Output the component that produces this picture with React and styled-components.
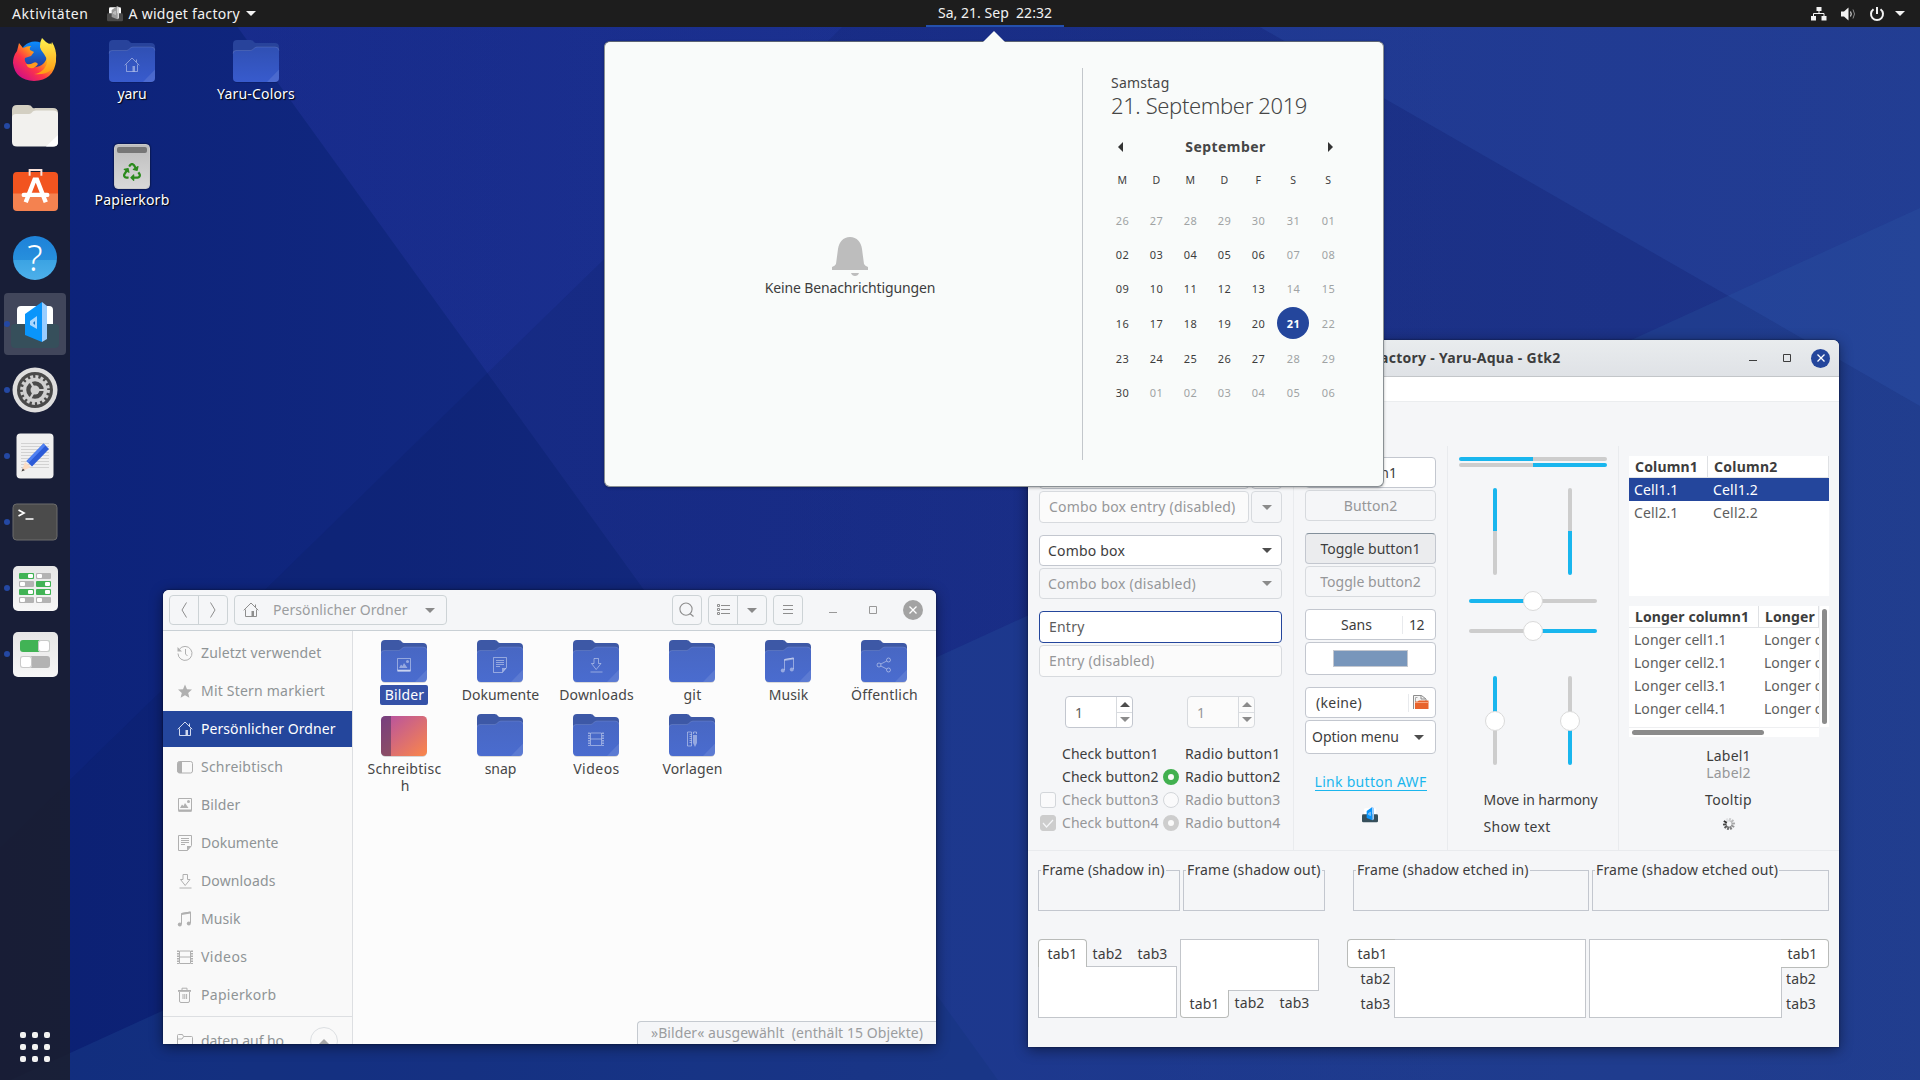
import React, { useLayoutEffect, useRef, useState } from 'react';
import styled, { createGlobalStyle, css } from 'styled-components';
import { FaRecycle } from 'react-icons/fa';

const Global = createGlobalStyle`
  *, *::before, *::after { box-sizing: border-box; }
  body { margin: 0; background: #10267a; overflow: hidden; }
  body, button, input {
    font-family: "Noto Sans", "Open Sans", sans-serif;
    font-size: 14px;
    color: #3d3d3d;
  }
  svg { display: block; flex: none; overflow: visible; }
`;

/* ---------- text with a fixed advance width ---------- */

const Run = styled.span`
  display: inline-block;
  flex: none;
  white-space: pre;
  line-height: ${(p) => p.$lh || 18}px;
  font-size: ${(p) => p.$size || 14}px;
  font-weight: ${(p) => p.$weight || 400};
  color: ${(p) => p.$color || 'inherit'};
`;

function Text({ w, children, size, weight, color, lh }) {
  const ref = useRef(null);
  const [spacing, setSpacing] = useState(0);
  useLayoutEffect(() => {
    if (!w || !ref.current) return;
    const el = ref.current;
    el.style.letterSpacing = '0px';
    const range = document.createRange();
    range.selectNodeContents(el);
    const next = (w - range.getBoundingClientRect().width) / String(children).length;
    el.style.letterSpacing = `${next}px`;
    setSpacing(next);
  }, [w, children]);
  return (
    <Run ref={ref} $size={size} $weight={weight} $color={color} $lh={lh} style={{ letterSpacing: `${spacing}px` }}>
      {children}
    </Run>
  );
}

/* ---------- shared bits ---------- */

const Caret = styled.span`
  flex: none;
  width: 0;
  height: 0;
  border: 5px solid transparent;
  ${(p) =>
    p.$up
      ? css`border-bottom-color: ${p.$color || '#4d4d4d'}; border-top-width: 0;`
      : css`border-top-color: ${p.$color || '#4d4d4d'}; border-bottom-width: 0;`}
`;

const glyphs = {
  home: (
    <>
      <path d="M.7 8.3 8 1l7.3 7.3M2.5 7.5v7h11v-7M12.5 5V2.5" fill="none" stroke="currentColor" />
      <path d="M8.5 9H11v5.5H8.5z" />
    </>
  ),
  recent: (
    <>
      <path d="M2.4 4.2A7 7 0 1 1 1 8.5M8.5 4v5l2 2" fill="none" stroke="currentColor" />
      <path d="M.5 2v4.5H5z" />
    </>
  ),
  star: <path d="m8 1.6 2 4.6 5 .4-3.8 3.3 1.2 4.9L8 12.2l-4.400 2.600 1.200-4.900L1 6.600l5-.4z" />,
  desktop: (
    <>
      <rect x=".5" y="2.5" width="15" height="11.5" rx="2" fill="none" stroke="currentColor" />
      <path d="M2 2.5h3V14H2L.5 12.500V4z" />
    </>
  ),
  image: (
    <>
      <path d="M1.500 1.500h13v12h-13zM1.500 14.200h13" fill="none" stroke="currentColor" />
      <path d="M3 11l2-3.500L6.500 9l1.500-3 3.500 5zM1.500 12.500h13v2h-13z" />
      <circle cx="11.500" cy="4.500" r="1.500" />
    </>
  ),
  doc: (
    <>
      <path d="M1.500.500h13v10l-4 5h-9zM4 3.500h8M4 5.500h8M4 7.500h8M4 9.500h4" fill="none" stroke="currentColor" />
      <path d="M10 15.500V11h4.500z" />
    </>
  ),
  download: (
    <path d="M6 1.500h4.500v5H13l-4.800 6L3.500 6.500H6zM2.500 15h12" fill="none" stroke="currentColor" />
  ),
  music: (
    <>
      <path d="M4.500 13V2.500L13.500 1v11" fill="none" stroke="currentColor" />
      <path d="M4.500 2 13.500.6v2L4.500 4z" />
      <circle cx="2.800" cy="13.500" r="2" />
      <circle cx="11.800" cy="12.500" r="2" />
    </>
  ),
  video: (
    <>
      <path d="M2.500 2v12.500h11V2zM2.500 8h11" fill="none" stroke="currentColor" />
      <path d="M1 1.500v13.500M15 1.500v13.500" fill="none" stroke="currentColor" strokeWidth="2" strokeDasharray="1.500 1" />
    </>
  ),
  trash: (
    <>
      <path d="M2.500 5v9q0 1.500 1.500 1.500h7q1.500 0 1.500-1.500V5M6 7v5M7.800 7v5M9.600 7v5" fill="none" stroke="currentColor" />
      <path d="M1 3h13v1.800H1z" />
      <path d="M5 3V1.200h5V3" fill="none" stroke="currentColor" />
    </>
  ),
  folder: (
    <path d="M.500 14V2.500q0-1 1-1h4l1 2h8q1 0 1 1V14zM.500 6h4.500l1.500-2.200" fill="none" stroke="currentColor" />
  ),
  share: (
    <path
      d="M12.500 1a2 2 0 1 1 0 4 2 2 0 0 1 0-4zM3 6a2 2 0 1 1 0 4 2 2 0 0 1 0-4zM12.500 11a2 2 0 1 1 0 4 2 2 0 0 1 0-4zM4.800 7l6-3M4.800 9l6 3"
      fill="none"
      stroke="currentColor"
    />
  ),
  template: (
    <>
      <path d="M3.500 1h4v14h-4zM5.500 3.500h2M5.500 5.500h2M5.500 7.500h2M5.500 9.500h2M5.500 11.500h2M9.500 3V1h3v2" fill="none" stroke="currentColor" />
      <path d="M9 4h4v8l-2 4-2-4z" />
    </>
  ),
};

const Glyph = ({ name }) => (
  <svg width="16" height="16" viewBox="0 0 16 16" fill="currentColor">
    {glyphs[name]}
  </svg>
);

const FolderIcon = ({ glyph, back = '#3d58a6', top = '#4867c3', bottom = '#4a6ccf', id }) => (
  <svg width="46" height="43" viewBox="0 0 46 43">
    <defs>
      <linearGradient id={id} x1="0" y1="0" x2="0" y2="1">
        <stop offset="0" stopColor={top} />
        <stop offset="1" stopColor={bottom} />
      </linearGradient>
    </defs>
    <path d="M1 38v3.500q1 1.300 3 1.300h38q2 0 3-1.300V38z" fill="rgba(0,0,0,.18)" />
    <path d="M0 4q0-4 4-4h13.500q2.500 0 3.500 2 .7 1 2 1H42q4 0 4 4v20H0z" fill={back} />
    <path d="M0 13.500q0-3 3-3h14.500c2.500 0 3.500-3.500 6.500-3.500h18q4 0 4 3.500V38q0 4-4 4H4q-4 0-4-4z" fill={`url(#${id})`} />
    <path d="M0 13.500q0-3 3-3h14.500c2.500 0 3.500-3.500 6.500-3.500h18q4 0 4 3.500" fill="none" stroke="rgba(255,255,255,.12)" />
    <path d="M34 42 46 29.500V38q0 4-4 4z" fill="rgba(255,255,255,.1)" />
    {glyph && (
      <g transform="translate(15 17)" color="rgba(255,255,255,.42)" fill="rgba(255,255,255,.42)">
        {glyphs[glyph]}
      </g>
    )}
  </svg>
);

const DesktopFolderIcon = () => (
  <svg width="46" height="43" viewBox="0 0 46 43">
    <defs>
      <linearGradient id="deskfold" x1="0" y1="0" x2="1" y2="1">
        <stop offset="0" stopColor="#b34fa6" />
        <stop offset="1" stopColor="#fb8749" />
      </linearGradient>
    </defs>
    <rect y="2.800" width="46" height="40" rx="4.500" fill="rgba(0,0,0,.2)" />
    <rect y="2" width="46" height="40" rx="4.500" fill="url(#deskfold)" />
    <path d="M10 2v40H4.500Q0 42 0 37.500v-31Q0 2 4.500 2z" fill="rgba(60,45,90,.5)" />
  </svg>
);

const AwfIcon = ({ size, gray, box = '#364f5b' }) => (
  <svg width={size} height={size} viewBox="0 0 48 48">
    <path d="M6 26V8q0-4 4-4h28q4 0 4 4v18z" fill="#fff" />
    <rect y="22" width="48" height="24" rx="4" fill={box} />
    <path d="M14 12 31 0v40L14 33z" fill={gray ? '#9a9a9a' : '#0a95fb'} />
    <path d="M31 0l5 4v33l-5 3z" fill={gray ? '#d5d5d5' : '#99cdff'} />
    <path d="M26 14v13l-7-4v-4z" fill={gray ? '#d0d0d0' : '#aad7ff'} />
    <path d="M24 19v4l-2-2z" fill={gray ? '#777' : '#0a74cc'} />
  </svg>
);

/* ---------- wallpaper ---------- */

const WallpaperSvg = styled.svg`
  position: absolute;
  inset: 0;
`;

const Wallpaper = () => (
  <WallpaperSvg width="1920" height="1080" viewBox="0 0 1920 1080">
    <defs>
      <linearGradient id="wall" x1="0" y1="0" x2="1" y2="0">
        <stop offset="0" stopColor="#0c2279" />
        <stop offset=".45" stopColor="#162d86" />
        <stop offset="1" stopColor="#21398f" />
      </linearGradient>
      <linearGradient id="fold" x1="0" y1="0" x2="1" y2="0">
        <stop offset="0" stopColor="#3c46c8" stopOpacity=".2" />
        <stop offset="1" stopColor="#3c46c8" stopOpacity=".04" />
      </linearGradient>
    </defs>
    <rect width="1920" height="1080" fill="url(#wall)" />
    <path d="M218 0 998 1080H1920V0z" fill="url(#fold)" />
    <path d="M870 0 0 848v232H1920V0z" fill="#04154c" fillOpacity=".13" />
    <path d="M0 1085 1920 208v872z" fill="#2c62a8" fillOpacity=".2" />
    <path d="M1213 0 1920 406V0z" fill="#3a6cc8" fillOpacity=".17" />
  </WallpaperSvg>
);

/* ---------- shell ---------- */

const Screen = styled.div`
  position: relative;
  width: 1920px;
  height: 1080px;
  overflow: hidden;
  display: flex;
  flex-direction: column;
`;

const TopBar = styled.header`
  position: relative;
  flex: none;
  height: 27px;
  background: #1d1d1d;
  color: #f2f2f2;
  display: grid;
  grid-template-columns: 926px 138px 1fr;
  align-items: center;
`;

const BarLeft = styled.div`
  display: flex;
  align-items: center;
  padding-left: 12px;
`;

const AppMenu = styled.div`
  display: flex;
  align-items: center;
  gap: 6px;
  margin-left: 18px;
`;

const Clock = styled.div`
  height: 27px;
  display: flex;
  justify-content: center;
  align-items: center;
  border-bottom: 2px solid #2450ac;
`;

const BarRight = styled.div`
  display: flex;
  justify-content: flex-end;
  align-items: center;
  gap: 14px;
  padding-right: 15px;
  & > :last-child { margin-left: -3px; }
`;

const Main = styled.div`
  position: relative;
  flex: 1;
  display: flex;
  min-height: 0;
`;

const Dock = styled.nav`
  width: 70px;
  background: rgba(27, 29, 43, 0.85);
  display: flex;
  flex-direction: column;
`;

const DockItem = styled.div`
  position: relative;
  width: 62px;
  height: ${(p) => (p.$active ? 62 : 66)}px;
  margin: ${(p) => (p.$active ? '2px 4px' : '0 4px')};
  padding-top: ${(p) => (p.$active ? 4 : 0)}px;
  border-radius: 4px;
  background: ${(p) => (p.$active ? 'rgba(255,255,255,.18)' : 'transparent')};
  display: flex;
  align-items: center;
  justify-content: center;
`;

const RunningDot = styled.i`
  position: absolute;
  left: 0;
  top: calc(50% - 3px);
  width: 6px;
  height: 6px;
  border-radius: 50%;
  background: #2448a3;
`;

const DockBottom = styled.div`
  margin-top: auto;
`;

const AppGrid = styled.div`
  display: grid;
  grid-template-columns: repeat(3, 6px);
  gap: 6px;
`;

const AppDot = styled.i`
  width: 6px;
  height: 6px;
  border-radius: 2px;
  background: #f2f2f2;
`;

const DesktopGrid = styled.div`
  display: grid;
  grid-template-columns: 124px 124px;
  grid-auto-rows: 105px;
  align-content: start;
  padding: 13px 0 0;
`;

const DesktopItem = styled.div`
  display: flex;
  flex-direction: column;
  align-items: center;
  gap: 2px;
  color: #fff;
  text-shadow: 1px 1px 1px #000;
`;

const Firefox = () => (
  <svg width="46" height="46" viewBox="0 0 46 46">
    <defs>
      <linearGradient id="ffo" x1=".9" y1=".1" x2=".15" y2=".85">
        <stop offset="0" stopColor="#fff44f" />
        <stop offset=".35" stopColor="#ffa716" />
        <stop offset=".65" stopColor="#ff3647" />
        <stop offset="1" stopColor="#d5127f" />
      </linearGradient>
      <linearGradient id="ffb" x1="0" y1="0" x2="0" y2="1">
        <stop offset="0" stopColor="#0a8cff" />
        <stop offset="1" stopColor="#2b2a85" />
      </linearGradient>
      <linearGradient id="ffy" x1="0" y1="0" x2="0" y2="1">
        <stop offset="0" stopColor="#fff44f" />
        <stop offset="1" stopColor="#ff9a14" />
      </linearGradient>
    </defs>
    <circle cx="23" cy="20" r="15.500" fill="url(#ffb)" />
    <path d="M5 14 7 6l4 5q4-2 8-2-2 2-1 4l4 2-3 4-6 2q-1 3 2 6 4 4 9 3 7-1 10-7 2-5 0-10l4-7q7 8 6 18-2 19-22 20Q3 43 1 26 1 19 5 14z" fill="url(#ffo)" />
    <path d="M30 1q-5 9 2 16 6 8 0 15-5 5-10 5 20 2 22-15 1-9-4-17l-1 3Q34 6 30 1z" fill="url(#ffy)" />
    <path d="M14 27q4 1 7-1t5 1q-3 5-8 4-3-1-4-4z" fill="#ff9a1f" />
  </svg>
);

const FilesIcon = () => (
  <svg width="46" height="42" viewBox="0 0 46 42">
    <path d="M0 5q0-5 5-5h11q3 0 4 2t3 1h18q5 0 5 5v12H0z" fill="#d3cfc2" />
    <path d="M0 13q0-4 4-4h13c3 0 3-3.500 7-3.500h17q5 0 5 4V37q0 4.500-5 4.500H5q-5 0-5-4.500z" fill="#f2f1ee" />
    <path d="M34 41.500 46 30v7q0 4.500-5 4.500z" fill="#fff" />
  </svg>
);

const SoftwareSvg = styled.svg`
  margin-bottom: 5px;
`;

const SoftwareIcon = () => (
  <SoftwareSvg width="45" height="42" viewBox="0 1 46 43" preserveAspectRatio="none">
    <path d="M0 8q0-4 4-4h38q4 0 4 4v19H0z" fill="#f2541f" />
    <path d="M0 26h46v14q0 4-4 4H4q-4 0-4-4z" fill="#f48250" />
    <path d="M17 8V2h12v6" fill="none" stroke="#fbe3da" strokeWidth="2" />
    <g stroke="#fff" strokeWidth="4.500" fill="none">
      <path d="M13 35 22 12h2.500L33.500 35" />
      <path d="M11 27.500h24" strokeLinecap="round" />
    </g>
  </SoftwareSvg>
);

const HelpCircle = styled.div`
  width: 44px;
  height: 44px;
  border-radius: 50%;
  background: linear-gradient(#1f84da 0 10%, #278fdc 54%, #3ba3e3 54%, #4db0ea);
  display: flex;
  align-items: center;
  justify-content: center;
`;

const SettingsIcon = () => (
  <svg width="46" height="46" viewBox="-23 -23 46 46">
    <circle r="22.500" fill="#dedede" />
    <circle r="18" fill="#4a4a4a" />
    <circle r="13.300" fill="none" stroke="#d0d0d0" strokeWidth="3.200" strokeDasharray="3 2.222" />
    <circle r="10.500" fill="none" stroke="#d0d0d0" strokeWidth="3.500" />
    <circle r="4.500" fill="#d0d0d0" />
    <path d="M0 0h10M0 0-5 9M0 0-5-9" stroke="#d0d0d0" strokeWidth="2.200" />
  </svg>
);

const EditorIcon = () => (
  <svg width="38" height="46" viewBox="0 0 38 46">
    <rect x=".5" y=".5" width="37" height="45" rx="4" fill="#f0f0f0" />
    <path d="M5 10.500h28M5 13.500h28M5 16.500h28M5 19.500h28M5 22.500h28M5 25.500h28M5 28.500h28M5 31.500h28M5 34.500h28" stroke="#d2d2d2" />
    <path d="M5.500 38.500 9 29l6 5z" fill="#fbdcc3" />
    <path d="M5.500 38.500 6.800 35.500l2 1.700z" fill="#444" />
    <path d="M10.500 28 27.500 10.500l5.500 5.500L16 33.500z" fill="#2c5bd8" />
    <path d="M10.500 28 27.500 10.500l2 2L12.500 30z" fill="#4f80f2" />
  </svg>
);

const TerminalIcon = () => (
  <svg width="46" height="38" viewBox="0 0 46 38">
    <rect x="1" y="1" width="44" height="36" rx="3.500" fill="#4b4b4b" stroke="#6c6c6c" />
    <path d="M6.500 7 12 10l-5.500 3M13.500 16h8" fill="none" stroke="#fff" strokeWidth="1.700" />
  </svg>
);

const Tile = styled.div`
  width: 45px;
  height: 45px;
  border-radius: 5px;
  background: linear-gradient(#e6e6e6, #f6f6f6);
  display: grid;
  grid-template-columns: ${(p) => (p.$single ? '30px' : '15px 15px')};
  gap: ${(p) => (p.$single ? '4px' : '2px')};
  place-content: center;
`;

const Switch = styled.i`
  height: ${(p) => (p.$big ? 12 : 6)}px;
  border-radius: ${(p) => (p.$big ? 3 : 1)}px;
  background: ${(p) => (p.$on ? '#41b355' : '#b3b3b3')};
  display: flex;
  justify-content: ${(p) => (p.$on ? 'flex-end' : 'flex-start')};
  padding: ${(p) => (p.$big ? 0 : 1)}px;
  &::after {
    content: '';
    width: ${(p) => (p.$big ? 12 : 5)}px;
    border-radius: inherit;
    background: #fff;
    box-shadow: ${(p) => (p.$big ? 'inset 0 0 0 1px #c9c9c9' : 'none')};
  }
`;

const TrashCan = styled.div`
  width: 36px;
  height: 45px;
  margin-top: -1px;
  border: 1px solid #c9c9c9;
  border-radius: 4px;
  background: linear-gradient(#bdbdbd, #d8d8d8);
  box-shadow: 0 0 2px #000;
  display: flex;
  flex-direction: column;
  align-items: center;
  gap: 10px;
  padding-top: 2px;
  color: #2b8a1d;
  &::before {
    content: '';
    width: 30px;
    height: 6px;
    border-radius: 2px;
    background: #777;
  }
`;

/* ---------- windows ---------- */

const Window = styled.section`
  position: absolute;
  left: ${(p) => p.$x}px;
  top: ${(p) => p.$y}px;
  width: ${(p) => p.$w}px;
  height: ${(p) => p.$h}px;
  border-radius: 6px 6px 0 0;
  overflow: hidden;
  display: flex;
  flex-direction: column;
  background: #f5f6f8;
  box-shadow: 0 0 2px rgba(0, 0, 0, 0.6), 0 3px 14px rgba(0, 0, 0, 0.45);
`;

const FilesHeader = styled.header`
  flex: none;
  height: 41px;
  display: flex;
  align-items: center;
  padding: 0 13px 0 6px;
  gap: 6px;
  background: #f5f6f8;
  border-bottom: 1px solid #c9d0d5;
  color: #8e8e8e;
`;

const HeaderGroup = styled.div`
  height: 30px;
  display: flex;
  border: 1px solid #cdd3d6;
  border-radius: 4px;
`;

const HeaderButton = styled.div`
  width: ${(p) => p.$w || 28}px;
  display: flex;
  align-items: center;
  justify-content: center;
  & + & { border-left: 1px solid #cdd3d6; width: 29px; }
`;

const PathButton = styled.div`
  width: 211px;
  display: flex;
  align-items: center;
  padding: 0 11px 0 8px;
  & > span:nth-of-type(1) { margin-left: 14px; }
  & > span:last-child { margin-left: auto; }
`;

const Spacer = styled.div`
  flex: 1;
`;

const WindowControls = styled.div`
  display: flex;
  align-items: center;
  color: ${(p) => p.$color};
  gap: ${(p) => p.$gap}px;
  margin-left: ${(p) => p.$ml || 0}px;
`;

const CloseCircle = styled.div`
  width: ${(p) => p.$size}px;
  height: ${(p) => p.$size}px;
  border-radius: 50%;
  background: ${(p) => p.$bg};
  display: flex;
  align-items: center;
  justify-content: center;
`;

const Controls = ({ color, closeBg, gap, closeGap, size, ml }) => (
  <WindowControls $color={color} $gap={gap} $ml={ml}>
    <svg width="8" height="8" viewBox="0 0 8 8"><path d="M0 6.500h8" stroke="currentColor" /></svg>
    <svg width="8" height="8" viewBox="0 0 8 8"><path d="M.500.500h7v7h-7z" fill="none" stroke="currentColor" /></svg>
    <WindowControls $ml={closeGap - gap}>
      <CloseCircle $bg={closeBg} $size={size}>
        <svg width="8" height="8" viewBox="0 0 8 8"><path d="M.5.5l7 7M7.500.5l-7 7" stroke="#fff" strokeWidth="1.300" /></svg>
      </CloseCircle>
    </WindowControls>
  </WindowControls>
);

const FilesBody = styled.div`
  flex: 1;
  display: flex;
  min-height: 0;
`;

const Sidebar = styled.aside`
  width: 190px;
  background: #f9f9f9;
  border-right: 1px solid #dddfe2;
  padding-top: 4px;
  overflow: hidden;
`;

const Place = styled.div`
  height: 36px;
  margin-bottom: 2px;
  padding: 0 14px;
  display: flex;
  align-items: center;
  gap: 8px;
  color: ${(p) => (p.$selected ? '#fff' : '#8f9496')};
  background: ${(p) => (p.$selected ? '#24469c' : 'transparent')};
  & > svg { color: ${(p) => (p.$selected ? '#d0d8ee' : '#b0b0b0')}; }
`;

const PlaceRule = styled.div`
  height: 1px;
  margin: 3px 0 6px;
  background: #dddfe2;
`;

const Eject = styled.div`
  width: 28px;
  height: 28px;
  flex: none;
  margin-left: auto;
  border: 1px solid #dcdfe2;
  border-radius: 50%;
  display: flex;
  align-items: center;
  justify-content: center;
`;

const FilesContent = styled.main`
  flex: 1;
  background: #fcfcfc;
  display: flex;
  flex-direction: column;
  justify-content: space-between;
  align-items: flex-end;
`;

const FileGrid = styled.div`
  display: grid;
  grid-template-columns: repeat(6, 96px);
  grid-auto-rows: 74px;
  width: 580px;
  padding-top: 9px;
`;

const FileCell = styled.div`
  display: flex;
  flex-direction: column;
  align-items: center;
  gap: 2px;
`;

const FileName = styled.div`
  height: 20px;
  padding: 1px 4px 0 5px;
  border-radius: 2px;
  display: flex;
  flex-direction: column;
  align-items: center;
  color: ${(p) => (p.$selected ? '#fff' : '#464646')};
  background: ${(p) => (p.$selected ? '#3552a8' : 'transparent')};
`;

const StatusBar = styled.footer`
  width: 299px;
  height: 23px;
  padding-left: 13px;
  display: flex;
  align-items: center;
  color: #9b9d9f;
  background: #f5f6f8;
  border: solid #c5cad0;
  border-width: 1px 0 0 1px;
  border-radius: 4px 0 0 0;
`;

const places = [
  ['recent', 'Zuletzt verwendet', 120.5],
  ['star', 'Mit Stern markiert', 124],
  ['home', 'Persönlicher Ordner', 134.5],
  ['desktop', 'Schreibtisch', 82],
  ['image', 'Bilder', 39.5],
  ['doc', 'Dokumente', 77.5],
  ['download', 'Downloads', 74.5],
  ['music', 'Musik', 39.5],
  ['video', 'Videos', 46.5],
  ['trash', 'Papierkorb', 75.5],
];

const files = [
  ['Bilder', 39.5, 'image'],
  ['Dokumente', 77.5, 'doc'],
  ['Downloads', 74.5, 'download'],
  ['git', 18, null],
  ['Musik', 39.5, 'music'],
  ['Öffentlich', 67, 'share'],
  ['Schreibtisc', 74, 'desk'],
  ['snap', 31.5, null],
  ['Videos', 46.5, 'video'],
  ['Vorlagen', 60, 'template'],
];

function FilesWindow() {
  return (
    <Window $x={163} $y={590} $w={773} $h={454}>
      <FilesHeader>
        <HeaderGroup>
          <HeaderButton>
            <svg width="6" height="16" viewBox="0 0 6 16"><path d="M5.500.5 1 8l4.500 7.500" fill="none" stroke="currentColor" /></svg>
          </HeaderButton>
          <HeaderButton>
            <svg width="6" height="16" viewBox="0 0 6 16"><path d="M.5.5 5 8 .5 15.500" fill="none" stroke="currentColor" /></svg>
          </HeaderButton>
        </HeaderGroup>
        <HeaderGroup>
          <PathButton>
            <Glyph name="home" />
            <Text w={134.5} color="#9b9d9f">Persönlicher Ordner</Text>
            <Caret $color="#8a8a8a" />
          </PathButton>
        </HeaderGroup>
        <Spacer />
        <HeaderGroup>
          <HeaderButton>
            <svg width="16" height="16" viewBox="0 0 16 16"><path d="M7 1a6 6 0 1 1 0 12.200A6 6 0 0 1 7 1zM11 11.500l3.500 3" fill="none" stroke="currentColor" strokeWidth="1.100" /></svg>
          </HeaderButton>
        </HeaderGroup>
        <HeaderGroup>
          <HeaderButton>
            <svg width="13" height="12" viewBox="0 0 13 12">
              <path d="M.500.500h2v2h-2zM.500 4.500h2v2h-2zM.500 8.500h2v2h-2zM4 1.500h9M4 5.500h9M4 9.500h9" fill="none" stroke="currentColor" />
            </svg>
          </HeaderButton>
          <HeaderButton><Caret $color="#8a8a8a" /></HeaderButton>
        </HeaderGroup>
        <HeaderGroup>
          <HeaderButton>
            <svg width="10" height="10" viewBox="0 0 10 10"><path d="M0 .500h10M0 4.500h10M0 8.500h10" stroke="currentColor" /></svg>
          </HeaderButton>
        </HeaderGroup>
        <Controls color="#999" closeBg="#a3a3a3" gap={32} closeGap={26} size={20} ml={20} />
      </FilesHeader>
      <FilesBody>
        <Sidebar>
          {places.map(([icon, label, w]) => (
            <Place key={label} $selected={icon === 'home'}>
              <Glyph name={icon} />
              <Text w={w}>{label}</Text>
            </Place>
          ))}
          <PlaceRule />
          <Place>
            <Glyph name="folder" />
            <Text w={83}>daten auf ho</Text>
            <Eject><Caret $up $color="#a8a8a8" /></Eject>
          </Place>
        </Sidebar>
        <FilesContent>
          <FileGrid>
            {files.map(([name, w, icon], i) => (
              <FileCell key={name}>
                {icon === 'desk' ? <DesktopFolderIcon /> : <FolderIcon id={`f${i}`} glyph={icon} />}
                <FileName $selected={i === 0}>
                  <Text w={w} lh={17}>{name}</Text>
                  {icon === 'desk' && <Text w={7.5} lh={17}>h</Text>}
                </FileName>
              </FileCell>
            ))}
          </FileGrid>
          <StatusBar>
            <Text w={272}>{'»Bilder« ausgewählt  (enthält 15 Objekte)'}</Text>
          </StatusBar>
        </FilesContent>
      </FilesBody>
    </Window>
  );
}

/* ---------- widget factory ---------- */

const TitleBar = styled.header`
  flex: none;
  height: 37px;
  display: grid;
  grid-template-columns: 1fr auto 1fr;
  align-items: center;
  padding: 0 9px;
  background: linear-gradient(#e9ecee, #dfe2e6);
  border-bottom: 1px solid #c3c6c9;
  & > :last-child { justify-self: end; }
`;

const MenuBar = styled.div`
  flex: none;
  height: 25px;
  background: #fff;
  border-bottom: 1px solid #ebedef;
`;

const ToolBar = styled.div`
  flex: none;
  height: 44px;
`;

const Columns = styled.div`
  flex: none;
  height: 405px;
  display: flex;
  border-bottom: 1px solid #e9ebee;
`;

const Column = styled.div`
  width: ${(p) => p.$w}px;
  padding: ${(p) => p.$pt || 11}px 11px 0 ${(p) => p.$pl || 11}px;
  border-right: ${(p) => (p.$last ? 0 : 1)}px solid #e9ebee;
  display: flex;
  flex-direction: column;
  align-items: ${(p) => p.$align || 'stretch'};
`;

const Control = styled.div`
  flex: ${(p) => (p.$grow ? 1 : 'none')};
  width: ${(p) => (p.$w ? `${p.$w}px` : 'auto')};
  height: ${(p) => p.$h || 31}px;
  margin-top: ${(p) => p.$mt || 0}px;
  padding: 0 ${(p) => p.$pr || 9}px 0 ${(p) => p.$pl || 9}px;
  border: 1px solid ${(p) => (p.$focus ? '#24469c' : p.$disabled ? '#d7dade' : '#c3c7cf')};
  border-top-color: ${(p) => p.$pressed && '#83909b'};
  border-radius: 4px;
  background: ${(p) => (p.$pressed ? '#ebecee' : p.$disabled ? (p.$field ? '#fbfbfb' : '#f5f6f8') : '#fff')};
  color: ${(p) => (p.$disabled ? '#969799' : '#3d3d3d')};
  display: flex;
  align-items: center;
  justify-content: ${(p) => p.$justify || 'space-between'};
`;

const Pair = styled.div`
  display: flex;
  gap: ${(p) => p.$gap || 2}px;
  margin-top: ${(p) => p.$mt || 0}px;
  padding-left: ${(p) => p.$pl || 0}px;
`;

const Spin = styled.div`
  width: 68px;
  height: 32px;
  display: flex;
  border: 1px solid ${(p) => (p.$disabled ? '#d7dade' : '#c3c7cf')};
  border-radius: 4px;
  background: ${(p) => (p.$disabled ? '#fbfbfb' : '#fff')};
  color: ${(p) => (p.$disabled ? '#969799' : '#5c5c5c')};
`;

const SpinValue = styled.div`
  width: 50px;
  padding-left: 9px;
  display: flex;
  align-items: center;
`;

const SpinButtons = styled.div`
  flex: 1;
  display: grid;
  grid-template-rows: 1fr 1fr;
  place-items: center;
  border-left: 1px solid #d7dade;
  background: linear-gradient(transparent 15px, #d9dce0 15px, #d9dce0 16px, transparent 16px);
`;

const Checks = styled.div`
  display: grid;
  grid-template-columns: 22px 101px 22px 1fr;
  grid-auto-rows: 23px;
  align-items: center;
  margin: 14px -11px 0 1px;
`;

const Mark = styled.i`
  width: 16px;
  height: 16px;
  border-radius: ${(p) => (p.$round ? '50%' : '3px')};
  border: ${(p) => (p.$fill && p.$round ? '5px' : '1px')} solid ${(p) => p.$fill || '#d3d6da'};
  background: ${(p) => (p.$fill && !p.$round ? p.$fill : p.$round && p.$fill ? '#fafafa' : '#fafafb')};
  visibility: ${(p) => (p.$hidden ? 'hidden' : 'visible')};
`;

const InnerRule = styled.i`
  width: 1px;
  height: 18px;
  background: #e8eaed;
`;

const Swatch = styled.div`
  width: 75px;
  height: 17px;
  background: #7896bb;
  border: 1px solid #c3c7cf;
`;

const LinkText = styled.a`
  margin: 19px auto 0;
  height: 18px;
  color: #1bb6ee;
  border-bottom: 1px solid #1bb6ee;
  display: flex;
`;

const IconRow = styled.div`
  display: flex;
  justify-content: center;
  margin-top: 16px;
  padding-right: 2px;
`;

const Bar = styled.div`
  flex: none;
  width: ${(p) => (p.$vertical ? '4px' : p.$len + 'px')};
  height: ${(p) => (p.$vertical ? p.$len + 'px' : '4px')};
  margin-top: ${(p) => p.$mt || 0}px;
  border-radius: 2px;
  background: linear-gradient(
    ${(p) => (p.$vertical ? '180deg' : '90deg')},
    ${(p) => (p.$flip ? '#cdcdcd' : '#19b6ee')} 50%,
    ${(p) => (p.$flip ? '#19b6ee' : '#cdcdcd')} 50%
  );
  display: flex;
  align-items: center;
  justify-content: center;
  &::after {
    content: '';
    display: ${(p) => (p.$knob ? 'block' : 'none')};
    flex: none;
    width: 20px;
    height: 20px;
    border-radius: 50%;
    border: 1px solid #dadada;
    background: #fff;
  }
`;

const BarPair = styled.div`
  display: flex;
  justify-content: space-between;
  width: 79px;
  margin-top: ${(p) => p.$mt}px;
  margin-right: 1px;
`;

const Captions = styled.div`
  display: flex;
  flex-direction: column;
  align-items: flex-start;
  gap: 9px;
  width: 99px;
  margin-top: 26px;
`;

const Table = styled.div`
  width: ${(p) => p.$w}px;
  height: ${(p) => p.$h}px;
  background: #fff;
  overflow: hidden;
`;

const TableRow = styled.div`
  height: ${(p) => (p.$head ? 22 : 23)}px;
  display: grid;
  grid-template-columns: ${(p) => p.$first}px 1fr;
  color: ${(p) => (p.$head ? '#3d3d3d' : p.$selected ? '#fff' : '#5e5e5e')};
  background: ${(p) => (p.$selected ? '#24469c' : '#fff')};
  border-bottom: ${(p) => (p.$head ? '1px solid #e2e4e7' : '0')};
`;

const TableCell = styled.div`
  padding-left: ${(p) => (p.$head ? 6 : 5)}px;
  display: flex;
  align-items: center;
  overflow: hidden;
  border-right: ${(p) => (p.$head ? '1px solid #dfe1e4' : '0')};
`;

const Scroller = styled.div`
  display: grid;
  grid-template-columns: 190px 9px;
  grid-template-rows: 121px 10px;
  column-gap: 1px;
  margin-top: 10px;
`;

const Track = styled.div`
  background: #fff;
  border-top: ${(p) => (p.$vertical ? 0 : 1)}px solid #eeeff1;
  padding: ${(p) => (p.$vertical ? '3px 0 0 2px' : '2px 0 0 3px')};
`;

const Thumb = styled.div`
  width: ${(p) => (p.$vertical ? 5 : 132)}px;
  height: ${(p) => (p.$vertical ? 115 : 5)}px;
  border-radius: 3px;
  background: #8b8b8b;
`;

const Labels = styled.div`
  display: flex;
  flex-direction: column;
  align-items: center;
  margin-top: 10px;
  & > :nth-child(2) { margin-bottom: 10px; }
  & > svg { margin-top: 9px; }
`;

const Frames = styled.div`
  display: flex;
  padding: 10px 10px 0;
`;

const Frame = styled.fieldset`
  flex: none;
  width: ${(p) => p.$w}px;
  height: 50px;
  margin: 0 0 0 ${(p) => p.$ml || 0}px;
  padding: 0;
  min-width: 0;
  border: 1px solid #c3c7cf;
  & > legend {
    height: 18px;
    margin-left: 2px;
    padding: 0 1px;
    line-height: 18px;
  }
`;

const Notebooks = styled.div`
  display: flex;
  align-items: flex-start;
  padding: 28px 10px 0;
`;

const Notebook = styled.div`
  flex: none;
  display: flex;
  flex-direction: ${(p) => p.$dir};
  width: ${(p) => p.$w}px;
  height: 79px;
  margin-left: ${(p) => p.$ml || 0}px;
`;

const Page = styled.div`
  flex: 1;
  background: #fff;
  border: 1px solid #c3c6cb;
`;

const tabShapes = {
  top: css`
    width: 49px; height: 28px; margin-bottom: -1px;
    border-bottom: 0; border-radius: 4px 4px 0 0;
  `,
  bottom: css`
    width: 49px; height: 28px; margin-top: -1px; padding-top: 1px;
    border-top: 0; border-radius: 0 0 4px 4px;
  `,
  left: css`
    width: 48px; height: 29px; margin-right: -1px; padding-left: 2px;
    border-right: 0; border-radius: 4px 0 0 4px;
  `,
  right: css`
    width: 48px; height: 29px; margin-left: -1px; padding-right: 4px;
    border-left: 0; border-radius: 0 4px 4px 0;
  `,
};

const tabPlaces = {
  top: css`width: 45px; justify-content: center; padding-top: 3px;`,
  bottom: css`width: 45px; justify-content: center; padding-bottom: 3px;`,
  left: css`width: 37px; justify-content: center; padding-bottom: 4px;`,
  right: css`width: 44px; padding: 0 0 4px 4px;`,
};

const Tabs = styled.div`
  position: relative;
  display: flex;
  flex-direction: ${(p) => (p.$side === 'left' || p.$side === 'right' ? 'column' : 'row')};
  align-items: ${(p) => (p.$side === 'left' ? 'flex-end' : p.$side === 'right' ? 'flex-start' : 'center')};
  width: ${(p) => (p.$side === 'left' || p.$side === 'right' ? '47px' : 'auto')};
`;

const ActiveTab = styled.div`
  flex: none;
  display: flex;
  align-items: center;
  justify-content: center;
  background: #fff;
  border: 1px solid #b9bbb9;
  ${(p) => tabShapes[p.$side]}
  & + * { margin-left: ${(p) => (p.$side === 'top' || p.$side === 'bottom' ? -2 : 0)}px; }
`;

const Tab = styled.div`
  flex: none;
  display: flex;
  align-items: center;
  height: 25px;
  ${(p) => tabPlaces[p.$side]}
`;

const TabStrip = ({ side }) => (
  <Tabs $side={side}>
    <ActiveTab $side={side}><Text w={30}>tab1</Text></ActiveTab>
    <Tab $side={side}><Text w={30}>tab2</Text></Tab>
    <Tab $side={side}><Text w={30}>tab3</Text></Tab>
  </Tabs>
);

const buttonChecks = [
  { mark: { $hidden: true }, radio: { $hidden: true } },
  { mark: { $hidden: true }, radio: { $fill: '#41b04f' } },
  { mark: {}, radio: {}, disabled: true },
  { mark: { $fill: '#cdcdcd' }, radio: { $fill: '#cdcdcd' }, disabled: true },
];

const CheckMark = styled(Mark)`
  display: flex;
  align-items: center;
  justify-content: center;
`;

const Spinner = () => (
  <svg width="12" height="12" viewBox="-6 -6 12 12">
    {Array.from({ length: 10 }, (_, i) => (
      <path key={i} d="M0-2.500v-3.500" stroke="#333" strokeWidth="2" opacity={1 - i * 0.1} transform={`rotate(${-36 * i - 60})`} />
    ))}
  </svg>
);

const OpenFolder = () => (
  <svg width="16" height="16" viewBox="0 0 16 16">
    <path d="M.5 15V1.500h8L13 5v4" fill="#f4f4f4" stroke="#8d8d8d" />
    <path d="M2.500 15V3.500h2" fill="none" stroke="#aaa" />
    <path d="M8 1.500V5h4" fill="none" stroke="#8d8d8d" />
    <path d="M2 7.500h2.500L6 6.500h9.500V15H2z" fill="#e8632c" />
    <path d="M2 8.500h13.500" stroke="#f6a27c" />
  </svg>
);

function FactoryWindow() {
  return (
    <Window $x={1028} $y={340} $w={811} $h={707}>
      <TitleBar>
        <i />
        <Text w={254} weight={700}>A widget factory - Yaru-Aqua - Gtk2</Text>
        <Controls color="#3d3d3d" closeBg="#24469c" gap={26} closeGap={20} size={19} />
      </TitleBar>
      <MenuBar />
      <ToolBar />
      <Columns>
        <Column $w={266}>
          <Pair>
            <Control $grow $h={32} $field><Text w={120}>Combo box entry</Text></Control>
            <Control $w={31} $h={32} $justify="center"><Caret /></Control>
          </Pair>
          <Pair $mt={2}>
            <Control $grow $h={32} $field $disabled><Text w={186.5}>Combo box entry (disabled)</Text></Control>
            <Control $w={31} $h={32} $justify="center" $disabled><Caret $color="#8b8b8b" /></Control>
          </Pair>
          <Control $mt={12} $pl={8}><Text w={77}>Combo box</Text><Caret /></Control>
          <Control $mt={2} $pl={8} $disabled><Text w={148}>Combo box (disabled)</Text><Caret $color="#8b8b8b" /></Control>
          <Control $mt={12} $h={32} $focus><Text w={35.5} color="#5c5c5c">Entry</Text></Control>
          <Control $mt={2} $h={32} $field $disabled><Text w={105.5}>Entry (disabled)</Text></Control>
          <Pair $mt={19} $gap={54} $pl={26}>
            <Spin>
              <SpinValue>1</SpinValue>
              <SpinButtons><Caret $up /><Caret $color="#8b8b8b" /></SpinButtons>
            </Spin>
            <Spin $disabled>
              <SpinValue>1</SpinValue>
              <SpinButtons><Caret $up $color="#8b8b8b" /><Caret $color="#8b8b8b" /></SpinButtons>
            </Spin>
          </Pair>
          <Checks>
            {buttonChecks.map(({ mark, radio, disabled }, i) => (
              <React.Fragment key={i}>
                <CheckMark {...mark}>
                  {mark.$fill && (
                    <svg width="12" height="12" viewBox="0 0 12 12"><path d="M1 6l3.500 4L11 3" fill="none" stroke="#f5f6f8" strokeWidth="1.200" /></svg>
                  )}
                </CheckMark>
                <Text w={96.5} color={disabled ? '#969799' : undefined}>{`Check button${i + 1}`}</Text>
                <Mark $round {...radio} />
                <Text w={95.500} color={disabled ? '#969799' : undefined}>{`Radio button${i + 1}`}</Text>
              </React.Fragment>
            ))}
          </Checks>
        </Column>

        <Column $w={154}>
          <Control $justify="center"><Text w={53}>Button1</Text></Control>
          <Control $mt={2} $justify="center" $disabled><Text w={53.5}>Button2</Text></Control>
          <Control $mt={12} $justify="center" $pressed><Text w={100}>Toggle button1</Text></Control>
          <Control $mt={2} $justify="center" $disabled><Text w={100.5}>Toggle button2</Text></Control>
          <Control $mt={12} $pl={35} $pr={11}><Text w={31}>Sans</Text><Pair $gap={6} $pl={18}><InnerRule /><Text w={15}>12</Text></Pair></Control>
          <Control $mt={2} $h={33} $justify="center"><Swatch /></Control>
          <Control $mt={12} $pl={10} $pr={6}><Text w={46}>(keine)</Text><Pair $gap={4}><InnerRule /><OpenFolder /></Pair></Control>
          <Control $mt={2} $h={34} $pl={6} $pr={11}><Text w={87}>Option menu</Text><Caret /></Control>
          <LinkText><Text w={112}>Link button AWF</Text></LinkText>
          <IconRow><AwfIcon size={16} /></IconRow>
        </Column>

        <Column $w={171} $align="center">
          <Bar $len={148} />
          <Bar $len={148} $flip $mt={2} />
          <BarPair $mt={21}><Bar $vertical $len={87} /><Bar $vertical $len={87} $flip /></BarPair>
          <Bar $len={128} $mt={24} $knob />
          <Bar $len={128} $mt={26} $knob $flip />
          <BarPair $mt={43}><Bar $vertical $len={89} $knob /><Bar $vertical $len={89} $knob $flip /></BarPair>
          <Captions>
            <Text w={114}>Move in harmony</Text>
            <Text w={67}>Show text</Text>
          </Captions>
        </Column>

        <Column $w={220} $pl={10} $pt={10} $last>
          <Table $w={200} $h={140}>
            <TableRow $head $first={79}>
              <TableCell $head><Text w={63} weight={700}>Column1</Text></TableCell>
              <TableCell $head><Text w={63.5} weight={700}>Column2</Text></TableCell>
            </TableRow>
            <TableRow $selected $first={79}>
              <TableCell><Text w={44.5}>Cell1.1</Text></TableCell>
              <TableCell><Text w={45}>Cell1.2</Text></TableCell>
            </TableRow>
            <TableRow $first={79}>
              <TableCell><Text w={44.5}>Cell2.1</Text></TableCell>
              <TableCell><Text w={45}>Cell2.2</Text></TableCell>
            </TableRow>
          </Table>
          <Scroller>
            <Table $w={190} $h={121}>
              <TableRow $head $first={130}>
                <TableCell $head><Text w={114} weight={700}>Longer column1</Text></TableCell>
                <TableCell $head><Text w={50} weight={700}>Longer</Text></TableCell>
              </TableRow>
              {[1, 2, 3, 4].map((n) => (
                <TableRow key={n} $first={130}>
                  <TableCell><Text w={92.5}>{`Longer cell${n}.1`}</Text></TableCell>
                  <TableCell><Text w={92.5}>{`Longer cell${n}.2`}</Text></TableCell>
                </TableRow>
              ))}
            </Table>
            <Track $vertical><Thumb $vertical /></Track>
            <Track><Thumb /></Track>
          </Scroller>
          <Labels>
            <Text w={44.500} lh={17}>Label1</Text>
            <Text w={44.500} lh={17} color="#969799">Label2</Text>
            <Text w={47}>Tooltip</Text>
            <Spinner />
          </Labels>
        </Column>
      </Columns>

      <Frames>
        <Frame $w={142}><legend><Text w={122.5}>Frame (shadow in)</Text></legend></Frame>
        <Frame $w={142} $ml={3}><legend><Text w={133.5}>Frame (shadow out)</Text></legend></Frame>
        <Frame $w={236} $ml={28}><legend><Text w={171.5}>Frame (shadow etched in)</Text></legend></Frame>
        <Frame $w={237} $ml={3}><legend><Text w={182}>Frame (shadow etched out)</Text></legend></Frame>
      </Frames>

      <Notebooks>
        <Notebook $dir="column" $w={139}><TabStrip side="top" /><Page /></Notebook>
        <Notebook $dir="column-reverse" $w={139} $ml={3}><TabStrip side="bottom" /><Page /></Notebook>
        <Notebook $dir="row" $w={239} $ml={28}><TabStrip side="left" /><Page /></Notebook>
        <Notebook $dir="row-reverse" $w={240} $ml={3}><TabStrip side="right" /><Page /></Notebook>
      </Notebooks>
    </Window>
  );
}

/* ---------- calendar popover ---------- */

const Popover = styled.section`
  position: absolute;
  left: 604px;
  top: 41px;
  width: 780px;
  height: 446px;
  display: flex;
  background: #f9fbfa;
  border: 1px solid #8a9094;
  border-top-color: #5c6474;
  border-radius: 6px;
  box-shadow: 0 1px 3px rgba(0, 0, 0, 0.3);
`;

const PopoverArrow = styled.i`
  position: absolute;
  left: 377px;
  top: -11px;
  width: 0;
  height: 0;
  border: 12px solid transparent;
  border-top-width: 0;
  border-bottom-color: #f9fbfa;
`;

const Notifications = styled.div`
  width: 478px;
  padding: 195px 0 0 12px;
  display: flex;
  flex-direction: column;
  align-items: center;
  gap: 2px;
`;

const Divider = styled.i`
  width: 1px;
  margin: 26px 0 26px -1px;
  background: #c3c7cb;
`;

const Calendar = styled.div`
  padding: 32px 0 0 28px;
  display: flex;
  flex-direction: column;
  align-items: flex-start;
  color: #464646;
`;

const MonthRow = styled.div`
  width: 215px;
  margin: 20px 0 0 7px;
  display: flex;
  align-items: center;
  justify-content: space-between;
`;

const DayGrid = styled.div`
  display: grid;
  grid-template-columns: repeat(5, 34px) 36px 34px;
  grid-template-rows: 40px 34px 34px 34px 36px 34px 34px;
  margin: 7px 0 0 -6px;
  place-items: center;
`;

const Day = styled.div`
  width: 32px;
  height: 32px;
  border-radius: 50%;
  display: flex;
  align-items: center;
  justify-content: center;
  padding-left: 1px;
  font-size: ${(p) => (p.$head ? 10.5 : 11)}px;
  letter-spacing: 0.5px;
  font-weight: ${(p) => (p.$today ? 700 : 400)};
  margin-top: ${(p) => (p.$head ? -6 : 0)}px;
  color: ${(p) => (p.$today ? '#fff' : p.$dim ? '#a0a3a4' : '#3d3d3d')};
  background: ${(p) => (p.$today ? '#24469c' : 'transparent')};
`;

function CalendarPopover() {
  const days = Array.from({ length: 42 }, (_, i) => {
    const d = new Date(2019, 7, 26 + i);
    return { n: d.getDate(), dim: d.getMonth() !== 8 || i % 7 > 4, today: d.getMonth() === 8 && d.getDate() === 21 };
  });
  return (
    <Popover>
      <PopoverArrow />
      <Notifications>
        <svg width="36" height="40" viewBox="0 0 36 40" fill="#bdbdbd">
          <path d="M18 0C25 0 29 5 30 12l2 15q1 2 4 3v3H0v-3q3-1 4-3L6 12C7 5 11 0 18 0z" />
          <path d="M19 36h8q-1 3-4 3t-4-3z" />
        </svg>
        <Text w={170.5}>Keine Benachrichtigungen</Text>
      </Notifications>
      <Divider />
      <Calendar>
        <Text w={58.5} size={14}>Samstag</Text>
        <Text w={196} size={22} weight={300} lh={26}>21. September 2019</Text>
        <MonthRow>
          <svg width="5" height="10" viewBox="0 0 5 10"><path d="M5 0v10L0 5z" fill="#333" /></svg>
          <Text w={80.5} weight={700}>September</Text>
          <svg width="5" height="10" viewBox="0 0 5 10"><path d="M0 0v10l5-5z" fill="#333" /></svg>
        </MonthRow>
        <DayGrid>
          {['M', 'D', 'M', 'D', 'F', 'S', 'S'].map((d, i) => <Day key={i} $head>{d}</Day>)}
          {days.map((d, i) => (
            <Day key={i} $dim={d.dim} $today={d.today}>{String(d.n).padStart(2, '0')}</Day>
          ))}
        </DayGrid>
      </Calendar>
    </Popover>
  );
}

/* ---------- dock ---------- */

const dockItems = [
  { icon: <Firefox /> },
  { icon: <FilesIcon />, running: true },
  { icon: <SoftwareIcon /> },
  { icon: <HelpCircle><Text size={36} weight={300} lh={44} color="#fff">?</Text></HelpCircle> },
  { icon: <AwfIcon size={48} />, running: true, active: true },
  { icon: <SettingsIcon />, running: true },
  { icon: <EditorIcon />, running: true },
  { icon: <TerminalIcon />, running: true },
  {
    icon: (
      <Tile>
        {[1, 0, 0, 1, 1, 1, 0, 0].map((on, i) => <Switch key={i} $on={on} />)}
      </Tile>
    ),
    running: true,
  },
  { icon: <Tile $single><Switch $big $on={1} /><Switch $big $on={0} /></Tile>, running: true },
];

export default function App() {
  return (
    <>
      <Global />
      <Screen>
        <Wallpaper />
        <TopBar>
          <BarLeft>
            <Text w={76.5}>Aktivitäten</Text>
            <AppMenu>
              <AwfIcon size={16} gray box="#4a4a4a" />
              <Text w={111.5}>A widget factory</Text>
              <Caret $color="#f2f2f2" />
            </AppMenu>
          </BarLeft>
          <Clock><Text w={114}>{'Sa, 21. Sep  22:32'}</Text></Clock>
          <BarRight>
            <svg width="16" height="14" viewBox="0 0 16 14" fill="#f2f2f2">
              <path d="M5.500 0h5v4h-5zM0 9h5v4.500H0zM10.500 9h5v4.500h-5z" />
              <path d="M8 4v2.500M2.500 9V6.500h10.500V9" fill="none" stroke="#f2f2f2" />
            </svg>
            <svg width="15" height="14" viewBox="0 0 15 14">
              <path d="M0 4.500h3L7.500.5v13L3 9.500H0z" fill="#f2f2f2" />
              <path d="M9.500 4.500q1.500 2.500 0 5" fill="none" stroke="#d8d8d8" strokeWidth="1.200" />
              <path d="M12 2.500q3 4.500 0 9" fill="none" stroke="#8a8a8a" />
            </svg>
            <svg width="14" height="14" viewBox="0 0 14 14">
              <path d="M3.500 2.200a6 6 0 1 0 7 0M7 0v7" fill="none" stroke="#f2f2f2" strokeWidth="2" />
            </svg>
            <Caret $color="#f2f2f2" />
          </BarRight>
        </TopBar>
        <Main>
          <Dock>
            {dockItems.map((item, i) => (
              <DockItem key={i} $active={item.active}>
                {item.running && <RunningDot />}
                {item.icon}
              </DockItem>
            ))}
            <DockBottom>
              <DockItem>
                <AppGrid>{Array.from({ length: 9 }, (_, i) => <AppDot key={i} />)}</AppGrid>
              </DockItem>
            </DockBottom>
          </Dock>
          <DesktopGrid>
            <DesktopItem>
              <FolderIcon id="d1" glyph="home" back="#28439b" top="#3050b4" bottom="#385bcd" />
              <Text w={29}>yaru</Text>
            </DesktopItem>
            <DesktopItem>
              <FolderIcon id="d2" back="#28439b" top="#3050b4" bottom="#385bcd" />
              <Text w={78}>Yaru-Colors</Text>
            </DesktopItem>
            <DesktopItem>
              <TrashCan><FaRecycle size={18} /></TrashCan>
              <Text w={75}>Papierkorb</Text>
            </DesktopItem>
          </DesktopGrid>
        </Main>
        <FilesWindow />
        <FactoryWindow />
        <CalendarPopover />
      </Screen>
    </>
  );
}
